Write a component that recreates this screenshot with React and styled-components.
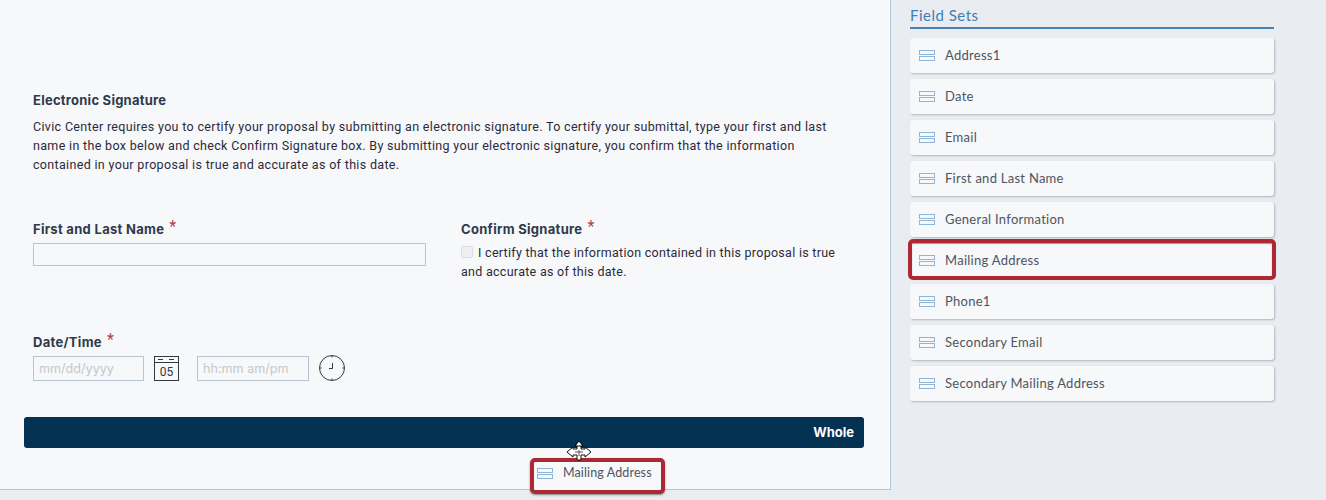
import React from "react";
import styled, { createGlobalStyle } from "styled-components";

const Global = createGlobalStyle`
  html, body { margin: 0; padding: 0; background: #e9edf1; overflow: hidden; }
  body { font-family: Roboto, "Liberation Sans", sans-serif; }
`;

const Page = styled.div`
  display: flex;
  width: 1326px;
  height: 500px;
  overflow: hidden;
  background: #e9edf1;
`;

const Panel = styled.main`
  position: relative;
  box-sizing: border-box;
  width: 891px;
  height: 490px;
  padding: 92px 26px 0 24px;
  background: #f7f8fa;
  border-right: 1px solid #b0c7dc;
  border-bottom: 1px solid #b0c7dc;
`;

const Section = styled.section`
  padding-left: 9px;
`;

const SectionTitle = styled.h2`
  margin: 0 0 9px;
  font: 700 13px/16px Inter, sans-serif;
  letter-spacing: 0.25px;
  color: #2f3a4c;
`;

const Paragraph = styled.p`
  margin: 0;
  width: 805px;
  font: 400 12.5px/19px Roboto, sans-serif;
  letter-spacing: 0.33px;
  color: #2c2a3a;
`;

const Columns = styled.div`
  display: flex;
  gap: 35px;
  margin-top: 45px;
`;

const Column = styled.div`
  width: ${p => p.$w}px;
`;

const Label = styled.div`
  display: flex;
  align-items: flex-start;
  height: 20px;
  font: 700 13px/20px Inter, sans-serif;
  letter-spacing: 0.3px;
  color: #2f3a4c;
`;

const Star = styled.span`
  margin-left: 5px;
  font: 400 16px/16px Roboto, sans-serif;
  color: #b04055;
`;

const TextInput = styled.div`
  box-sizing: border-box;
  width: ${p => p.$w}px;
  height: ${p => p.$h}px;
  margin-top: ${p => p.$mt || 0}px;
  padding-left: 5px;
  border: 1px solid #b8c4d2;
  font: 400 12.6px/23px Inter, sans-serif;
  color: #c4c8cd;
  background: #f7f8fa;
`;

const CheckText = styled.div`
  margin-top: 4px;
  width: 385px;
  font: 400 12.5px/19px Roboto, sans-serif;
  letter-spacing: 0.28px;
  color: #2c2a3a;
`;

const Check = styled.span`
  display: inline-block;
  box-sizing: border-box;
  width: 12px;
  height: 12px;
  margin-right: 5px;
  vertical-align: -1px;
  border: 1px solid #dcdde0;
  border-radius: 2px;
  background: #eeeff1;
`;

const DateBlock = styled.div`
  margin-top: 51px;
`;

const DateRow = styled.div`
  display: flex;
  align-items: center;
  height: 26px;
  margin-top: 3px;
`;

const IconSlot = styled.span`
  display: flex;
  margin: 0 ${p => p.$mr}px 0 ${p => p.$ml}px;
`;

const Bar = styled.div`
  display: flex;
  justify-content: flex-end;
  align-items: center;
  box-sizing: border-box;
  height: 31px;
  margin-top: 36px;
  padding-right: 10px;
  background: #033252;
  border-radius: 3px;
  font: 700 13px/31px Inter, sans-serif;
  color: #fff;
`;

const Side = styled.aside`
  width: 364px;
  margin-left: 19px;
  padding-top: 5px;
`;

const SideTitle = styled.h3`
  margin: 0 0 9px;
  height: 22px;
  font: 400 15px/20px Lato, sans-serif;
  letter-spacing: 0.5px;
  color: #3d7fb5;
  border-bottom: 2px solid #4682b4;
`;

const List = styled.div`
  display: flex;
  flex-direction: column;
  gap: 6px;
`;

const Item = styled.div`
  position: relative;
  display: flex;
  align-items: center;
  gap: 10px;
  box-sizing: border-box;
  height: 35px;
  padding-left: 9px;
  background: #f7f8fa;
  border-radius: 3px;
  box-shadow: 1px 1px 2px rgba(70, 80, 95, 0.35);
  font: 400 13px/18px Lato, sans-serif;
  letter-spacing: 0.27px;
  color: #4d5561;
`;

const ItemText = styled.span`
  margin-bottom: 2px;
`;

const Highlight = styled.span`
  position: absolute;
  inset: -4px -2px -2px -2px;
  border: 4px solid #ad2832;
  border-radius: 5px;
  box-shadow: inset 0 1px 1px rgba(60, 60, 60, 0.5);
  pointer-events: none;
`;

const Ghost = styled.div`
  position: absolute;
  left: 530px;
  top: 458px;
  display: flex;
  align-items: center;
  gap: 10px;
  box-sizing: border-box;
  width: 135px;
  height: 36px;
  padding: 0 0 6px 3px;
  background: #f7f8fa;
  border: 4px solid #ad2832;
  border-radius: 5px;
  box-shadow: 0 1px 2px rgba(60, 60, 60, 0.6);
  font: 400 12.5px/18px Lato, sans-serif;
  letter-spacing: 0.12px;
  color: #4d5561;
`;

const Cursor = styled.svg`
  position: absolute;
  left: 566px;
  top: 440px;
`;

const RowIcon = () => (
  <svg width="16" height="11" viewBox="0 0 16 11" fill="none" stroke="#8fb5d9" strokeWidth="1">
    <rect x="0.5" y="0.5" width="15" height="4" />
    <rect x="0.5" y="6.5" width="15" height="4" />
  </svg>
);

const CalendarIcon = () => (
  <svg width="25" height="25" viewBox="0 0 25 25" fill="none" stroke="#33383e" strokeWidth="1">
    <rect x="0.5" y="0.5" width="24" height="24" />
    <path d="M0.5 6.5H24.5M4 3.5H9M15 3.5H20" />
    <text x="12.5" y="20" textAnchor="middle" fontFamily="Roboto, sans-serif" fontSize="12" fill="#33383e" stroke="none">05</text>
  </svg>
);

const ClockIcon = () => (
  <svg width="26" height="26" viewBox="0 0 26 26" fill="none" stroke="#33383e" strokeWidth="1">
    <circle cx="13" cy="13" r="12.5" />
    <path d="M13 0.5V2.5M13 23.5V25.5M0.5 13H2.5M23.5 13H25.5M13.5 8V13.5H10" />
  </svg>
);

const fields = ["Address1", "Date", "Email", "First and Last Name", "General Information", "Mailing Address", "Phone1", "Secondary Email", "Secondary Mailing Address"];

export default function App() {
  return (
    <Page>
      <Global />
      <Panel>
        <Section>
          <SectionTitle>Electronic Signature</SectionTitle>
          <Paragraph>
            Civic Center requires you to certify your proposal by submitting an electronic signature. To certify your submittal, type your first and last name in the box below and check Confirm Signature box. By submitting your electronic signature, you confirm that the information contained in your proposal is true and accurate as of this date.
          </Paragraph>
          <Columns>
            <Column $w={393}>
              <Label>First and Last Name<Star>*</Star></Label>
              <TextInput $w={393} $h={23} $mt={4} />
            </Column>
            <Column $w={385}>
              <Label>Confirm Signature<Star>*</Star></Label>
              <CheckText><Check />I certify that the information contained in this proposal is true and accurate as of this date.</CheckText>
            </Column>
          </Columns>
          <DateBlock>
            <Label>Date/Time<Star>*</Star></Label>
            <DateRow>
              <TextInput $w={111} $h={25}>mm/dd/yyyy</TextInput>
              <IconSlot $ml={10} $mr={18}><CalendarIcon /></IconSlot>
              <TextInput $w={112} $h={25}>hh:mm am/pm</TextInput>
              <IconSlot $ml={10} $mr={0}><ClockIcon /></IconSlot>
            </DateRow>
          </DateBlock>
        </Section>
        <Bar>Whole</Bar>
      </Panel>
      <Side>
        <SideTitle>Field Sets</SideTitle>
        <List>
          {fields.map(f => (
            <Item key={f}>
              <RowIcon />
              <ItemText>{f}</ItemText>
              {f === "Mailing Address" && <Highlight />}
            </Item>
          ))}
        </List>
      </Side>
      <Ghost><RowIcon />Mailing Address</Ghost>
      <Cursor width="26" height="22" viewBox="0 0 26 22">
        <path d="M13 1L17 6H15V9H19V7L25 12L19 17V15H15V20H11V15H7V17L1 12L7 7V9H11V6H9Z" fill="#fff" stroke="#111" strokeWidth="1" />
        <path d="M13 1L17 6H9Z" fill="#fff" stroke="#000" />
        <path d="M9 12H17M13 10V16" stroke="#555" strokeWidth="1" fill="none" />
      </Cursor>
    </Page>
  );
}
